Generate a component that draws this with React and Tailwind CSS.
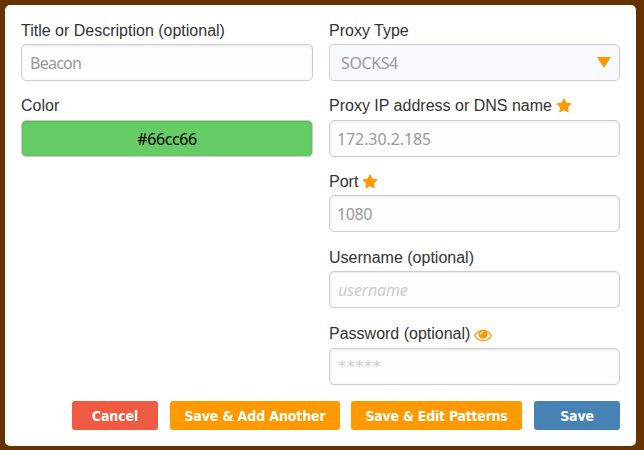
const STAR =
  'M1728 647q0 22-26 48l-363 354 86 500q1 7 1 20 0 21-10.5 35.5t-30.5 14.5q-19 0-40-12l-449-236-449 236q-22 12-40 12-21 0-31.5-14.5t-10.5-35.5q0-6 2-20l86-500-364-354q-25-27-25-48 0-37 56-46l502-73 225-455q19-41 49-41t49 41l225 455 502 73q56 9 56 46z';
const EYE =
  'M1664 960q-152-236-381-353 61 104 61 225 0 185-131.5 316.5t-316.5 131.5-316.5-131.5-131.5-316.5q0-121 61-225-229 117-381 353 133 205 333.5 326.5t434.5 121.5 434.5-121.5 333.5-326.5zm-720-384q0-20-14-34t-34-14q-125 0-214.5 89.5t-89.5 214.5q0 20 14 34t34 14 34-14 14-34q0-86 61-147t147-61q20 0 34-14t14-34zm848 384q0 34-20 69-140 230-376.5 368.5t-499.5 138.5-499.5-139-376.5-368q-20-35-20-69t20-69q140-229 376.5-368t499.5-139 499.5 139 376.5 368q20 35 20 69z';

function Icon({ path, className }) {
  return (
    <svg viewBox="0 0 1792 1792" className={className} fill="currentColor" aria-hidden="true">
      <path d={path} />
    </svg>
  );
}

function Field({ label, icon, className = '', labelClass = '', children }) {
  return (
    <div className={`flex flex-col ${className}`}>
      <div className={`flex h-7 items-center whitespace-nowrap text-base text-[#333] ${labelClass}`}>
        {label}
        {icon}
      </div>
      {children}
    </div>
  );
}

const box =
  "flex h-[37px] w-full items-center rounded-[5px] border border-[#ccc] px-2 font-['Noto_Sans',sans-serif] text-base";
const input = `${box} bg-[#fdfdfd] text-[#999] shadow-[inset_0_1px_3px_#e8e8e8]`;

function Button({ className, children }) {
  return (
    <button
      className={`h-[29px] whitespace-nowrap rounded-[3px] font-['DejaVu_Sans_Condensed','DejaVu_Sans',sans-serif] text-sm font-bold text-white ${className}`}
    >
      {children}
    </button>
  );
}

export default function App() {
  return (
    <div className="h-[450px] w-[644px] bg-[#663300] pl-[5px] pt-[5px] font-['Liberation_Sans',sans-serif]">
      <div className="h-[441px] w-[631px] rounded-[5px] bg-white px-4 pt-[11px]">
        <div className="flex gap-4">
          <div className="flex w-[292px] flex-col gap-[11px]">
            <Field label="Title or Description (optional)" labelClass="pt-0.5">
              <div className={input}>
                <span className="tracking-[-0.75px]">Beacon</span>
              </div>
            </Field>
            <Field label="Color">
              <div className={`${box} justify-center bg-[#66cc66] text-black shadow-[inset_0_1px_3px_#5ab75a]`}>
                <span className="tracking-[-0.4px]">#66cc66</span>
              </div>
            </Field>
          </div>
          <div className="flex w-[291px] flex-col">
            <Field label="Proxy Type" className="mb-[11px]" labelClass="pt-0.5">
              <div className={`${box} justify-between bg-[#f8f8ff] pl-[11px] text-[#999]`}>
                <span className="tracking-[-0.4px]">SOCKS4</span>
                <svg viewBox="0 0 14 11" className="h-[11px] w-[14px]" fill="#ff9900" aria-hidden="true">
                  <path d="M0 0H14L7 11Z" />
                </svg>
              </div>
            </Field>
            <Field
              label="Proxy IP address or DNS name"
              className="mb-[10px]"
              icon={<Icon path={STAR} className="ml-1 size-4 text-[#ff9900]" />}
            >
              <div className={`${input} pl-[7px]`}>
                <span className="tracking-[-0.1px]">172.30.2.185</span>
              </div>
            </Field>
            <Field
              label="Port"
              className="mb-[11px]"
              labelClass="pt-0.5"
              icon={<Icon path={STAR} className="ml-1 size-4 text-[#ff9900]" />}
            >
              <div className={`${input} pl-[7px]`}>
                <span className="tracking-[-0.4px]">1080</span>
              </div>
            </Field>
            <Field label="Username (optional)" className="mb-[12px]" labelClass="pt-0.5">
              <div className={`${input} italic`}>
                <span className="tracking-[-0.15px] text-[#ccc]">username</span>
              </div>
            </Field>
            <Field
              label="Password (optional)"
              icon={<Icon path={EYE} className="ml-1 mt-0.5 size-[18px] text-[#ff9900]" />}
            >
              <div className={`${input} italic`}>
                <span className="font-['DejaVu_Sans',sans-serif] tracking-[0.7px] text-[#ccc]">*****</span>
              </div>
            </Field>
          </div>
        </div>
        <div className="mt-4 flex justify-end">
          <Button className="mr-3 w-[86px] bg-[#ee5a42] tracking-[-0.1px]">Cancel</Button>
          <Button className="mr-[11px] w-[170px] bg-[#ff9900] tracking-[-0.12px]">Save &amp; Add Another</Button>
          <Button className="mr-3 w-[171px] bg-[#ff9900] tracking-[-0.24px]">Save &amp; Edit Patterns</Button>
          <Button className="w-[86px] bg-[#4682b4] tracking-[-0.2px]">Save</Button>
        </div>
      </div>
    </div>
  );
}
